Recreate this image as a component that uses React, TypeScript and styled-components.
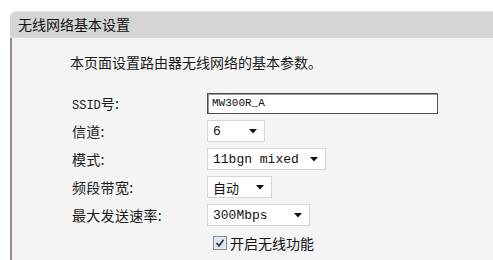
import React from 'react';
import styled, { createGlobalStyle } from 'styled-components';

const GlobalStyle = createGlobalStyle`
  html, body {
    margin: 0;
    padding: 0;
    background: #ffffff;
    font-family: 'Noto Sans CJK SC', 'Noto Sans', sans-serif;
    color: #222;
  }
`;

type Field = { label: string; latin?: string; kind: 'input' | 'select'; value: string; width: number };

const fields: Field[] = [
  { label: '号:', latin: 'SSID', kind: 'input', value: 'MW300R_A', width: 231 },
  { label: '信道:', kind: 'select', value: '6', width: 58 },
  { label: '模式:', kind: 'select', value: '11bgn mixed', width: 119 },
  { label: '频段带宽:', kind: 'select', value: '自动', width: 65 },
  { label: '最大发送速率:', kind: 'select', value: '300Mbps', width: 103 },
];

const Arrow = () => (
  <svg width="8" height="5" viewBox="0 0 8 5">
    <path d="M0 0 L8 0 L4 4.5 Z" fill="#111" />
  </svg>
);

const Check = () => (
  <svg width="14" height="14" viewBox="0 0 14 14">
    <rect x="0.5" y="0.5" width="13" height="13" fill="#e9edf3" stroke="#7d8aa0" />
    <rect x="2" y="2" width="10" height="10" fill="#dfe4ec" />
    <path d="M3.5 7 L6 9.8 L10.5 3.8" fill="none" stroke="#2b3a55" strokeWidth="1.8" />
  </svg>
);

const App: React.FC = () => {
  return (
    <Page>
      <GlobalStyle />
      <Panel>
        <Header>无线网络基本设置</Header>
        <Body>
          <Intro>本页面设置路由器无线网络的基本参数。</Intro>
          <Form>
            {fields.map((f) => (
              <React.Fragment key={f.label}>
                <Label>
                  {f.latin && <Latin>{f.latin}</Latin>}
                  {f.label}
                </Label>
                <Cell>
                  {f.kind === 'input' ? (
                    <TextBox $width={f.width}>{f.value}</TextBox>
                  ) : (
                    <SelectBox $width={f.width}>
                      <SelectValue>{f.value}</SelectValue>
                      <Arrow />
                    </SelectBox>
                  )}
                </Cell>
              </React.Fragment>
            ))}
            <span />
            <CheckRow>
              <Check />
              <CheckText>开启无线功能</CheckText>
            </CheckRow>
          </Form>
        </Body>
      </Panel>
    </Page>
  );
};

// Styled components
const Page = styled.div`
  padding: 11px 0 0 10px;
  height: 249px;
  overflow: hidden;
`;

const Panel = styled.div`
  display: flex;
  flex-direction: column;
  height: 100%;
`;

const Header = styled.div`
  height: 25px;
  line-height: 25px;
  background: #d5d5d5;
  border-top: 1px solid #e4e4e4;
  border-bottom: 1px solid #dadada;
  border-top-left-radius: 6px;
  padding-left: 8px;
  font-size: 14px;
  color: #111;
`;

const Body = styled.div`
  flex: 1;
  background: #f4f4f4;
  border-left: 2px solid #9b898d;
  padding: 14px 0 0 58px;
`;

const Intro = styled.div`
  font-size: 14px;
  line-height: 20px;
  color: #1a1a1a;
`;

const Form = styled.div`
  display: grid;
  grid-template-columns: 135px auto;
  grid-auto-rows: 28px;
  align-items: center;
  margin: 17px 0 0 2px;
`;

const Label = styled.div`
  font-size: 14px;
  color: #1a1a1a;
  letter-spacing: 0.3px;
`;

const Latin = styled.span`
  font-family: 'Liberation Mono', monospace;
  font-size: 12px;
  letter-spacing: 0;
`;

const Cell = styled.div`
  display: flex;
  align-items: center;
`;

const TextBox = styled.div<{ $width: number }>`
  box-sizing: border-box;
  width: ${(p) => p.$width}px;
  height: 21px;
  border: 1px solid #4c4f50;
  box-shadow: inset 1px 1px 0 #9a9a9a;
  background: #fff;
  padding-left: 4px;
  font-family: 'Liberation Mono', monospace;
  font-size: 11px;
  line-height: 19px;
  color: #111;
`;

const SelectBox = styled.div<{ $width: number }>`
  box-sizing: border-box;
  width: ${(p) => p.$width}px;
  height: 22px;
  border: 1px solid #d6d6d6;
  background: #fff;
  display: flex;
  align-items: center;
  justify-content: space-between;
  padding: 0 7px 0 5px;
`;

const SelectValue = styled.span`
  font-family: 'Liberation Mono', 'Noto Sans CJK SC', monospace;
  font-size: 13px;
  color: #111;
`;

const CheckRow = styled.div`
  display: flex;
  align-items: center;
  gap: 3px;
  padding-left: 6px;
`;

const CheckText = styled.span`
  font-size: 14px;
  color: #111;
`;

export default App;
